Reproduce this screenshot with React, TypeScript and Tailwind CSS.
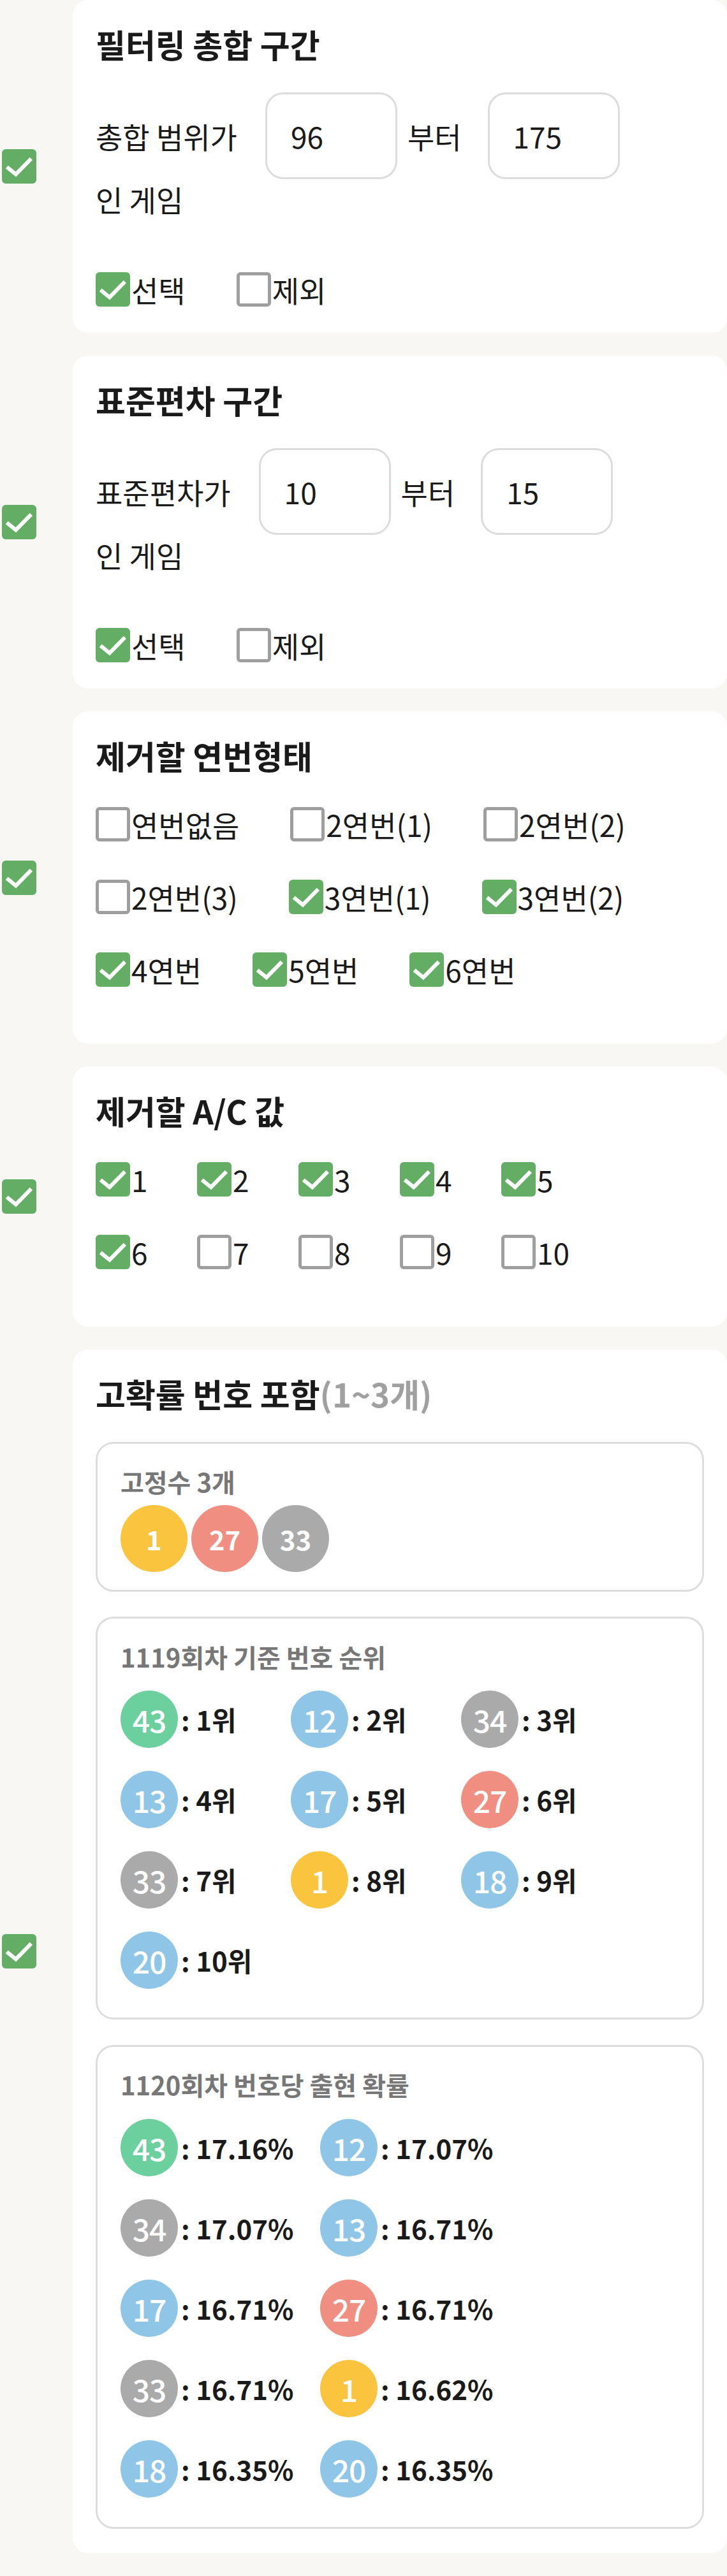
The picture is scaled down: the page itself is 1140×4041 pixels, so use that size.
import React from "react";

const ballColor = (n: number) => {
  if (n <= 10) return "bg-[#fbc43f]";
  if (n <= 20) return "bg-[#8fc6e7]";
  if (n <= 30) return "bg-[#f08e81]";
  if (n <= 40) return "bg-[#aaaaaa]";
  return "bg-[#6ccf9e]";
};

const Check = ({ on }: { on: boolean }) =>
  on ? (
    <span className="flex h-[54px] w-[54px] shrink-0 items-center justify-center rounded-[6px] bg-[#63ad65]">
      <svg viewBox="0 0 24 24" className="h-[54px] w-[54px]" fill="none">
        <path d="M3.4 12.4 9.7 17.5 20.4 6.6" stroke="#fff" strokeWidth={2.7} />
      </svg>
    </span>
  ) : (
    <span className="h-[54px] w-[54px] shrink-0 rounded-[6px] border-[5px] border-[#9e9e9e] bg-white" />
  );

const Option = ({ label, on }: { label: string; on: boolean }) => (
  <label className="flex h-[54px] items-center">
    <Check on={on} />
    <span className="ml-[2px] text-[46px] leading-none">{label}</span>
  </label>
);

const Card = ({ children }: { children: React.ReactNode }) => (
  <div className="flex items-center">
    <div className="w-[114px] shrink-0 pl-[3px]">
      <Check on />
    </div>
    <section className="flex-1 rounded-[24px] bg-white px-[36px] pt-[33px]">
      {children}
    </section>
  </div>
);

const Title = ({ children }: { children: React.ReactNode }) => (
  <h2 className="h-[72px] text-[51px] font-bold leading-[72px] text-[#1a1a1a]">{children}</h2>
);

const RangeCard = ({
  title,
  label,
  from,
  to,
}: {
  title: string;
  label: string;
  from: string;
  to: string;
}) => (
  <Card>
    <Title>{title}</Title>
    <div className="mt-[40px] flex items-center text-[46px]">
      <span>{label}</span>
      <div className="ml-[44px] flex h-[136px] w-[207px] items-center rounded-[28px] border-[3px] border-[#dcdcdc] pl-[37px] text-[46px]">
        {from}
      </div>
      <span className="ml-[16px]">부터</span>
      <div className="ml-[41px] flex h-[136px] w-[207px] items-center rounded-[28px] border-[3px] border-[#dcdcdc] pl-[37px] text-[46px]">
        {to}
      </div>
    </div>
    <p className="text-[46px] leading-[63px]">인 게임</p>
    <div className="mt-[83px] flex gap-x-[80px] pb-[41px]">
      <Option label="선택" on />
      <Option label="제외" on={false} />
    </div>
  </Card>
);

const Ball = ({ n, big }: { n: number; big?: boolean }) => (
  <span
    className={
      big
        ? `flex h-[105px] w-[105px] shrink-0 items-center justify-center rounded-full text-[42px] font-bold text-white ${ballColor(n)}`
        : `flex h-[90px] w-[90px] shrink-0 items-center justify-center rounded-full text-[48px] font-medium tracking-[-1px] text-white ${ballColor(n)}`
    }
  >
    {n}
  </span>
);

const ranks = [43, 12, 34, 13, 17, 27, 33, 1, 18, 20];
const probs: [number, string][] = [
  [43, "17.16"],
  [12, "17.07"],
  [34, "17.07"],
  [13, "16.71"],
  [17, "16.71"],
  [27, "16.71"],
  [33, "16.71"],
  [1, "16.62"],
  [18, "16.35"],
  [20, "16.35"],
];

const streaks: [string, boolean][] = [
  ["연번없음", false],
  ["2연번(1)", false],
  ["2연번(2)", false],
  ["2연번(3)", false],
  ["3연번(1)", true],
  ["3연번(2)", true],
  ["4연번", true],
  ["5연번", true],
  ["6연번", true],
];

export default function App() {
  return (
    <div className="min-h-screen bg-[#f8f7f3] pb-[36px] font-['Noto_Sans_CJK_KR',sans-serif] text-[#1a1a1a]">
      <div className="flex flex-col gap-[36px]">
        <RangeCard title="필터링 총합 구간" label="총합 범위가" from="96" to="175" />
        <RangeCard title="표준편차 구간" label="표준편차가" from="10" to="15" />

        <Card>
          <Title>제거할 연번형태</Title>
          <div className="mt-[45px] flex flex-wrap gap-x-[80px] gap-y-[60px] pb-[89px]">
            {streaks.map(([label, on]) => (
              <Option key={label} label={label} on={on} />
            ))}
          </div>
        </Card>

        <Card>
          <Title>제거할 A/C 값</Title>
          <div className="mt-[45px] grid grid-cols-[repeat(5,159px)] gap-y-[60px] pb-[90px]">
            {[1, 2, 3, 4, 5, 6, 7, 8, 9, 10].map((n) => (
              <Option key={n} label={String(n)} on={n <= 6} />
            ))}
          </div>
        </Card>

        <Card>
          <Title>
            고확률 번호 포함<span className="text-[#a0a0a0]">(1~3개)</span>
          </Title>

          <div className="mt-[40px] rounded-[28px] border-[3px] border-[#dddddd] px-[36px] pb-[28px] pt-[30px]">
            <h3 className="text-[40px] font-bold leading-[58px] text-[#777777]">고정수 3개</h3>
            <div className="mt-[8px] flex gap-[6px]">
              <Ball n={1} big />
              <Ball n={27} big />
              <Ball n={33} big />
            </div>
          </div>

          <div className="mt-[39px] rounded-[28px] border-[3px] border-[#dddddd] px-[36px] pb-[45px] pt-[31px]">
            <h3 className="text-[40px] font-bold leading-[58px] text-[#777777]">1119회차 기준 번호 순위</h3>
            <div className="mt-[24px] grid grid-cols-[repeat(3,267px)] gap-y-[36px]">
              {ranks.map((n, i) => (
                <div key={n} className="flex items-center">
                  <Ball n={n} />
                  <span className="ml-[5px] text-[42px] font-bold leading-none">: {i + 1}위</span>
                </div>
              ))}
            </div>
          </div>

          <div className="mt-[40px] mb-[38px] rounded-[28px] border-[3px] border-[#dddddd] px-[36px] pb-[46px] pt-[30px]">
            <h3 className="text-[40px] font-bold leading-[58px] text-[#777777]">1120회차 번호당 출현 확률</h3>
            <div className="mt-[25px] grid grid-cols-[repeat(2,313px)] gap-y-[36px]">
              {probs.map(([n, p]) => (
                <div key={n} className="flex items-center">
                  <Ball n={n} />
                  <span className="ml-[5px] text-[42px] font-bold leading-none">: {p}%</span>
                </div>
              ))}
            </div>
          </div>
        </Card>
      </div>
    </div>
  );
}
